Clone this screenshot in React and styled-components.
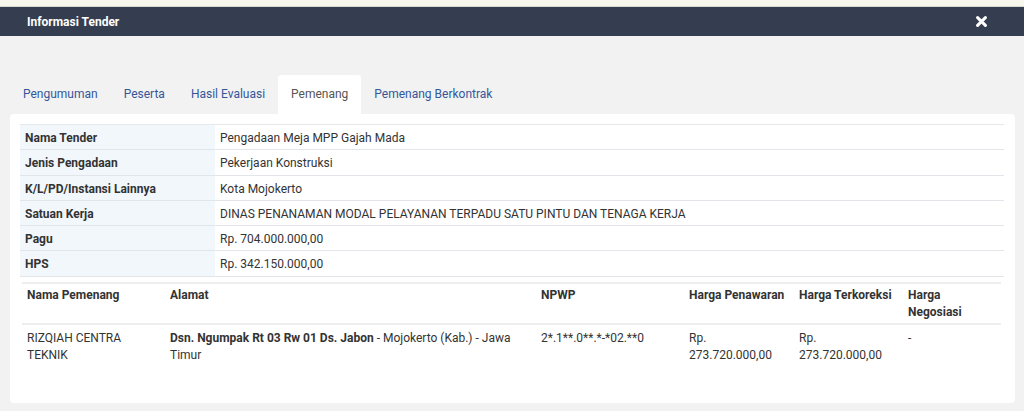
import React from "react";
import { useState } from "react";
import { styled, createGlobalStyle } from "styled-components";

const GlobalStyle = createGlobalStyle`
  html, body {
    margin: 0;
    padding: 0;
    background: #f2f2f2;
    font-family: Roboto, "Liberation Sans", Arial, sans-serif;
    font-size: 12px;
    color: #333;
  }
`;

const TopStrip = styled.div`
  height: 6px;
  background: #f7f7ee;
  border-bottom: 1px solid #d9dbd0;
`;

const Header = styled.div`
  height: 29px;
  background: #343e50;
  display: flex;
  align-items: center;
  justify-content: space-between;
  padding: 0 37px 0 27px;
`;

const Title = styled.div`
  color: #fff;
  font-weight: 700;
  font-size: 12px;
`;

const CloseBtn = styled.button`
  border: 0;
  background: none;
  padding: 0;
  display: flex;
  cursor: pointer;
`;

const Body = styled.div`
  padding: 39px 9px 8px 10px;
`;

const Tabs = styled.div`
  display: flex;
`;

const Tab = styled.div`
  padding: 12px 13px;
  line-height: 15px;
  cursor: pointer;
  color: ${(p) => (p.$active ? "#555" : "#34579a")};
  background: ${(p) => (p.$active ? "#fff" : "transparent")};
  border-radius: 3px 3px 0 0;
`;

const Card = styled.div`
  background: #fff;
  border-radius: 4px;
  padding: 10px 11px 34px 10px;
`;

const InfoTable = styled.table`
  width: 100%;
  border-collapse: collapse;
  border-top: 1px solid #e6e9ec;
`;

const Label = styled.th`
  width: 185px;
  text-align: left;
  font-weight: 700;
  background: #f2f7fc;
  padding: 5px 5px 3px;
  line-height: 16.3px;
  border-bottom: 1px solid #e2e6ea;
`;

const Value = styled.td`
  padding: 5px 5px 3px;
  line-height: 16.3px;
  border-bottom: 1px solid #e2e6ea;
`;

const WinnerWrap = styled.div`
  padding: 5px 3px 0 2px;
`;

const WinnerTable = styled.table`
  width: 100%;
  border-collapse: collapse;
  table-layout: fixed;
  border-top: 2px solid #eceef0;
`;

const Th = styled.th`
  text-align: left;
  vertical-align: top;
  font-weight: 700;
  padding: 3px 5px 2px;
  line-height: 17px;
  border-bottom: 2px solid #eceef0;
`;

const Td = styled.td`
  vertical-align: top;
  padding: 5px 5px 5px;
  line-height: 17px;
`;

function CloseIcon() {
  return (
    <svg width="11" height="11" viewBox="0 0 11 11">
      <path
        d="M1.6 1.6 L9.4 9.4 M9.4 1.6 L1.6 9.4"
        stroke="#fff"
        strokeWidth="3"
        strokeLinecap="round"
      />
    </svg>
  );
}

const info = [
  ["Nama Tender", "Pengadaan Meja MPP Gajah Mada"],
  ["Jenis Pengadaan", "Pekerjaan Konstruksi"],
  ["K/L/PD/Instansi Lainnya", "Kota Mojokerto"],
  ["Satuan Kerja", "DINAS PENANAMAN MODAL PELAYANAN TERPADU SATU PINTU DAN TENAGA KERJA"],
  ["Pagu", "Rp. 704.000.000,00"],
  ["HPS", "Rp. 342.150.000,00"],
];

const tabs = ["Pengumuman", "Peserta", "Hasil Evaluasi", "Pemenang", "Pemenang Berkontrak"];

export default function App() {
  const [active, setActive] = useState("Pemenang");

  return (
    <>
      <GlobalStyle />
      <TopStrip />
      <Header>
        <Title>Informasi Tender</Title>
        <CloseBtn>
          <CloseIcon />
        </CloseBtn>
      </Header>
      <Body>
        <Tabs>
          {tabs.map((t) => (
            <Tab key={t} $active={t === active} onClick={() => setActive(t)}>
              {t}
            </Tab>
          ))}
        </Tabs>
        <Card>
          <InfoTable>
            <tbody>
              {info.map(([k, v]) => (
                <tr key={k}>
                  <Label>{k}</Label>
                  <Value>{v}</Value>
                </tr>
              ))}
            </tbody>
          </InfoTable>
          <WinnerWrap>
            <WinnerTable>
              <colgroup>
                <col style={{ width: 143 }} />
                <col style={{ width: 371 }} />
                <col style={{ width: 148 }} />
                <col style={{ width: 110 }} />
                <col style={{ width: 109 }} />
                <col />
              </colgroup>
              <thead>
                <tr>
                  <Th>Nama Pemenang</Th>
                  <Th>Alamat</Th>
                  <Th>NPWP</Th>
                  <Th>Harga Penawaran</Th>
                  <Th>Harga Terkoreksi</Th>
                  <Th>Harga Negosiasi</Th>
                </tr>
              </thead>
              <tbody>
                <tr>
                  <Td>RIZQIAH CENTRA TEKNIK</Td>
                  <Td>
                    <b>Dsn. Ngumpak Rt 03 Rw 01 Ds. Jabon</b> - Mojokerto (Kab.) - Jawa Timur
                  </Td>
                  <Td>2*.1**.0**.*-*02.**0</Td>
                  <Td>Rp. 273.720.000,00</Td>
                  <Td>Rp. 273.720.000,00</Td>
                  <Td>-</Td>
                </tr>
              </tbody>
            </WinnerTable>
          </WinnerWrap>
        </Card>
      </Body>
    </>
  );
}
